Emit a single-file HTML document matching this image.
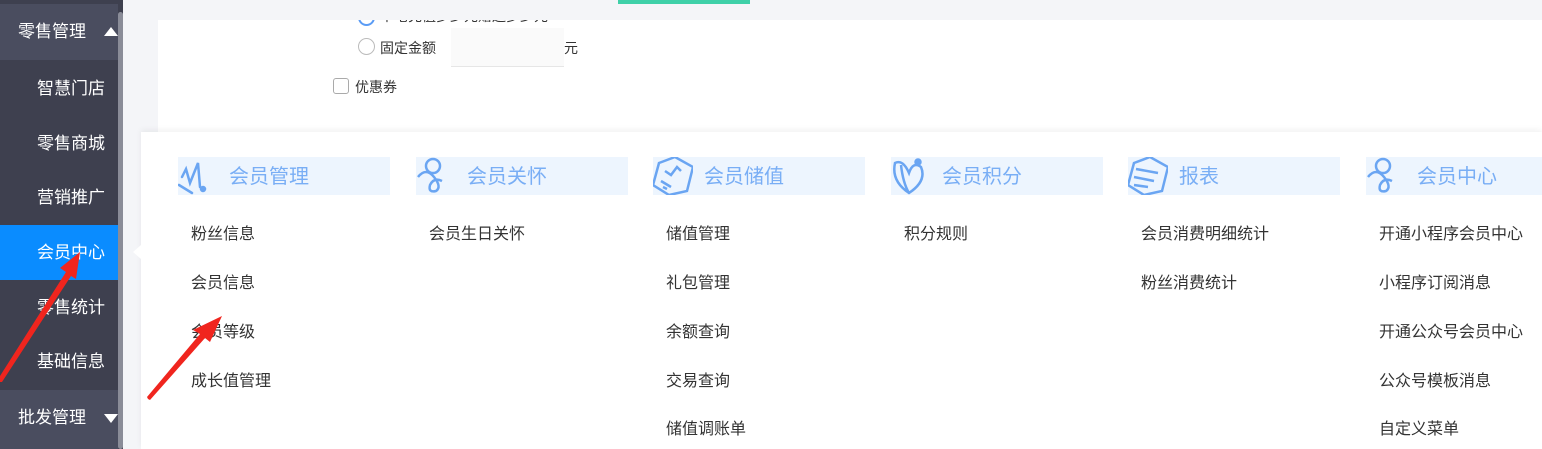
<!DOCTYPE html>
<html><head><meta charset="utf-8"><style>
*{margin:0;padding:0;box-sizing:border-box}
body{width:1542px;height:449px;overflow:hidden;position:relative;background:#f4f5f8;font-family:"Liberation Sans","Noto Sans CJK SC",sans-serif}
.side{position:absolute;left:0;top:0;width:123px;height:449px;background:#3e404f}
.side .hd{position:absolute;left:0;width:118px;height:60px;background:#4a4d5f;color:#fff;font-size:17px;line-height:60px;padding-left:18px}
.side .it{position:absolute;left:0;width:118px;height:55px;color:#fff;font-size:17px;line-height:55px;padding-left:37px}
.side .act{background:#0a8cff}
.sb{position:absolute;left:118px;top:12px;width:5px;height:437px;background:#8a8c98;border-radius:3px}
.tri{position:absolute;width:0;height:0;border-left:7px solid transparent;border-right:7px solid transparent}
.card{position:absolute;left:158px;top:20px;width:1384px;height:112px;background:#fff;overflow:hidden}
.panel{position:absolute;left:141px;top:132px;width:1401px;height:317px;background:#fff;box-shadow:0 -2px 6px rgba(0,0,0,.06)}
.col{position:absolute;top:157px}
.ch{width:212px;height:38px;background:#edf5fe;color:#79aef5;font-size:20px;line-height:40px;padding-left:51px;position:relative}
.ch svg{position:absolute;left:0;top:0}
.li{position:absolute;left:13px;font-size:16px;color:#333;white-space:nowrap}
</style></head><body>
<div style="position:absolute;left:618px;top:0;width:132px;height:4px;background:#3fd0a8"></div>
<div class="card">
<div style="position:absolute;left:200px;top:-11px;width:17px;height:17px;border:2px solid #5b9cf5;border-radius:50%"></div>
<div style="position:absolute;left:222px;top:-14px;font-size:14px;color:#333">单笔充值多少元赠送多少元</div>
<div style="position:absolute;left:200px;top:18px;width:17px;height:17px;border:1px solid #bbb;border-radius:50%"></div>
<div style="position:absolute;left:222px;top:18px;font-size:14px;color:#333">固定金额</div>
<div style="position:absolute;left:293px;top:8px;width:113px;height:39px;background:#fafafa;border-bottom:1px solid #e6e6e6"></div>
<div style="position:absolute;left:406px;top:18px;font-size:14px;color:#333">元</div>
<div style="position:absolute;left:175px;top:58px;width:16px;height:16px;border:1px solid #aaa;border-radius:3px"></div>
<div style="position:absolute;left:197px;top:57px;font-size:14px;color:#333">优惠券</div>
</div>
<div class="side">
<div class="hd" style="top:4px;height:56px;line-height:56px">零售管理</div>
<div class="tri" style="left:104px;top:27px;border-bottom:9px solid #fff"></div>
<div class="it" style="top:61px">智慧门店</div>
<div class="it" style="top:116px">零售商城</div>
<div class="it" style="top:170px">营销推广</div>
<div class="it act" style="top:225px">会员中心</div>
<div class="it" style="top:280px">零售统计</div>
<div class="it" style="top:334px">基础信息</div>
<div class="hd" style="top:390px;height:59px;line-height:56px">批发管理</div>
<div class="tri" style="left:104px;top:414px;border-top:9px solid #fff"></div>
</div>
<div class="sb"></div>
<div class="panel"></div>
<div style="position:absolute;left:133px;top:245px;width:0;height:0;border-top:7px solid transparent;border-bottom:7px solid transparent;border-right:8px solid #fff"></div>

<div class="col" style="left:178px"><div class="ch"><svg width="40" height="38" viewBox="0 0 40 38" fill="none" stroke="#6aa5f2" stroke-width="2.5" stroke-linecap="round"><path d="M4 20 L8 12 L12 26 L20 6 L22 30 M1 28 L14 36"/><circle cx="25" cy="32" r="2" fill="#6aa5f2"/></svg>会员管理</div>
<div class="li" style="top:63px">粉丝信息</div><div class="li" style="top:112px">会员信息</div><div class="li" style="top:161px">会员等级</div><div class="li" style="top:210px">成长值管理</div></div>

<div class="col" style="left:416px"><div class="ch"><svg width="40" height="38" viewBox="0 0 40 38" fill="none" stroke="#6aa5f2" stroke-width="2.5"><circle cx="17" cy="9" r="7"/><path d="M2 20 Q10 10 18 20 Q26 30 20 34 Q12 36 14 28 Q18 20 26 24"/></svg>会员关怀</div>
<div class="li" style="top:63px">会员生日关怀</div></div>

<div class="col" style="left:653px"><div class="ch"><svg width="40" height="38" viewBox="0 0 40 38" fill="none" stroke="#6aa5f2" stroke-width="2.5"><path d="M6 6 L22 0 L40 10 L34 34 L16 38 L0 28 Z"/><path d="M12 14 L18 18 L24 10 L28 14 M8 24 L18 30 M10 30 L14 32"/></svg>会员储值</div>
<div class="li" style="top:63px">储值管理</div><div class="li" style="top:112px">礼包管理</div><div class="li" style="top:161px">余额查询</div><div class="li" style="top:210px">交易查询</div><div class="li" style="top:258px">储值调账单</div></div>

<div class="col" style="left:891px"><div class="ch"><svg width="40" height="38" viewBox="0 0 40 38" fill="none" stroke="#6aa5f2" stroke-width="2.5"><path d="M4 6 Q0 24 18 36 Q36 24 30 10 Q22 4 18 16 Q12 2 4 6 Z M10 8 Q12 26 18 36"/><circle cx="27" cy="5" r="2.5" fill="#6aa5f2"/></svg>会员积分</div>
<div class="li" style="top:63px">积分规则</div></div>

<div class="col" style="left:1128px"><div class="ch"><svg width="40" height="38" viewBox="0 0 40 38" fill="none" stroke="#6aa5f2" stroke-width="2.5"><path d="M6 6 L22 0 L40 10 L34 34 L16 38 L0 28 Z"/><path d="M8 12 L30 16 M6 20 L26 24 M6 28 L20 30"/></svg>报表</div>
<div class="li" style="top:63px">会员消费明细统计</div><div class="li" style="top:112px">粉丝消费统计</div></div>

<div class="col" style="left:1366px"><div class="ch" style="width:176px"><svg width="40" height="38" viewBox="0 0 40 38" fill="none" stroke="#6aa5f2" stroke-width="2.5"><circle cx="17" cy="9" r="7"/><path d="M2 20 Q10 10 18 20 Q26 30 20 34 Q12 36 14 28 Q18 20 26 24"/></svg>会员中心</div>
<div class="li" style="top:63px">开通小程序会员中心</div><div class="li" style="top:112px">小程序订阅消息</div><div class="li" style="top:161px">开通公众号会员中心</div><div class="li" style="top:210px">公众号模板消息</div><div class="li" style="top:258px">自定义菜单</div></div>

<svg style="position:absolute;left:0;top:0" width="1542" height="449">
<path d="M0 382 L0 376 L66 272 L60 268 L80 252 L76 279 L71 276 L2 382 Z" fill="#f0251e"/>
<path d="M148 399 L147 397 L200 334 L193 330 L222 316 L210 342 L205 338 L150 400 Z" fill="#f0251e"/>
</svg>
</body></html>
